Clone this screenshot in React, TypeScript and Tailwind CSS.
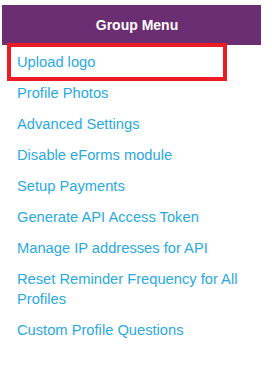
import React from 'react';

const items = [
  'Upload logo',
  'Profile Photos',
  'Advanced Settings',
  'Disable eForms module',
  'Setup Payments',
  'Generate API Access Token',
  'Manage IP addresses for API',
  'Reset Reminder Frequency for All Profiles',
  'Custom Profile Questions',
];

export default function App() {
  return (
    <div className="w-[272px] h-[379px] bg-white pt-[5px] pl-[2px] font-['Liberation_Sans',Arial,sans-serif]">
      <div className="relative w-[259px]">
        <div className="h-[40px] bg-[#6b2e72] flex items-center justify-center pl-[11px] text-white font-bold text-[14px]">
          Group Menu
        </div>
        <ul className="pt-[1px]">
          {items.map((item, i) => (
            <li
              key={i}
              className="pl-[15px] pr-[10px] pt-[6px] pb-[5px] text-[14.7px] leading-[20px] text-[#2aa9e0]"
            >
              {item}
            </li>
          ))}
        </ul>
        {/* highlight box */}
        <div className="absolute left-[5px] top-[38px] w-[220px] h-[38px] border-4 border-[#ed1c24]" />
      </div>
    </div>
  );
}
